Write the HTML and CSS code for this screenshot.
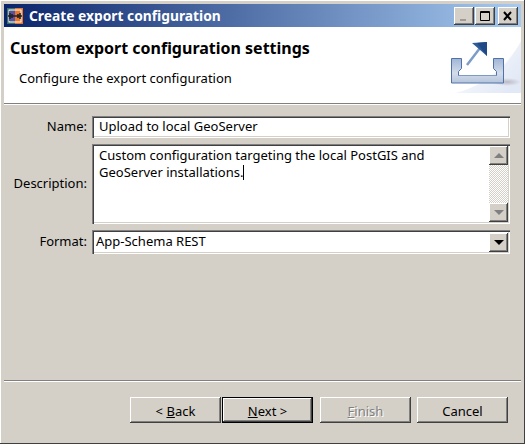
FILE: index.html
```html
<!DOCTYPE html>
<html lang="en">
<head>
  <meta charset="UTF-8" />
  <title>Create export configuration</title>
  <link rel="stylesheet" href="styles.css">
</head>
<body>

  <div class="window">
    <header class="titlebar">
      <svg class="app-icon" width="16" height="16" viewBox="0 0 16 16">
        <rect x="0" y="0" width="8" height="16" fill="#3f6f6a"/>
        <rect x="8" y="0" width="8" height="16" fill="#e8762c"/>
        <rect x="2" y="2" width="12" height="12" fill="none" stroke="#fff" stroke-width="1"/>
        <rect x="2" y="3" width="6" height="10" fill="#5a4fa0"/>
        <path d="M1 8h14M3 5v6M5 6v4M11 6v4M13 5v6" stroke="#222" stroke-width="1.6" fill="none"/>
      </svg>
      <span class="title-text">Create export configuration</span>
      <div class="win-btns">
        <button class="win-btn"><svg width="16" height="14" viewBox="0 0 16 14"><rect x="4" y="10" width="6" height="2" fill="#a09c94"/></svg></button>
        <button class="win-btn max-btn"><svg width="16" height="14" viewBox="0 0 16 14"><path d="M3.5 2.5h9v9h-9zM3 3.5h10" fill="none" stroke="#000"/></svg></button>
        <button class="win-btn close-btn"><svg width="16" height="14" viewBox="0 0 16 14"><path d="M4 3l7 8M11 3l-7 8" fill="none" stroke="#000" stroke-width="2"/></svg></button>
      </div>
    </header>

    <section class="banner">
      <div class="banner-text">
        <h1>Custom export configuration settings</h1>
        <p>Configure the export configuration</p>
      </div>
      <svg class="banner-art" width="80" height="76" viewBox="0 0 80 76">
        <defs>
          <linearGradient id="sweep" x1="0" y1="0" x2="1" y2="0.7">
            <stop offset="0" stop-color="#fff"/>
            <stop offset="1" stop-color="#e2e9f6"/>
          </linearGradient>
          <linearGradient id="tray" x1="0" y1="0" x2="0" y2="1">
            <stop offset="0" stop-color="#9fb5d5"/>
            <stop offset="0.6" stop-color="#d3dcea"/>
            <stop offset="1" stop-color="#b4c4dc"/>
          </linearGradient>
          <radialGradient id="shade">
            <stop offset="0" stop-color="#b9b9c4"/>
            <stop offset="1" stop-color="#b9b9c4" stop-opacity="0"/>
          </radialGradient>
        </defs>
        <path d="M14 66C40 60 66 40 80 14V66z" fill="url(#sweep)"/>
        <path d="M34 30C50 18 66 8 80 0v14C66 40 50 56 14 66z" fill="#fff" opacity="0.45"/>
        <ellipse cx="66" cy="55" rx="14" ry="4" fill="url(#shade)"/>
        <path d="M10.5 31.500h10v10l-3 3v4h38v-4l-3-3v-10h10v24.500h-52z" fill="url(#tray)" stroke="#4f73a8"/>
        <path d="M17.500 48.500h38" stroke="#7f9ac2"/>
        <path d="M26 38l13-17" stroke="#7d9cc8" stroke-width="2.500" fill="none"/>
        <path d="M31 16l15-1v14z" fill="#2f5c98"/>
        <path d="M36 16l10-1v14z" fill="#1f4a85"/>
      </svg>
    </section>

    <main class="form">
      <label class="field-label">Name:</label>
      <div class="field"><input class="text-input" type="text" value="Upload to local GeoServer"></div>

      <label class="field-label">Description:</label>
      <div class="field memo">
        <div class="memo-text">Custom configuration targeting the local PostGIS and GeoServer installations.<span class="caret"></span></div>
        <div class="scrollbar">
          <button class="scroll-btn"><span class="arrow up"></span></button>
          <div class="scroll-track"></div>
          <button class="scroll-btn"><span class="arrow down"></span></button>
        </div>
      </div>

      <label class="field-label">Format:</label>
      <div class="field combo">
        <span class="combo-value">App-Schema REST</span>
        <button class="scroll-btn"><span class="arrow down dark"></span></button>
      </div>
    </main>

    <footer class="footer">
      <button class="btn"><span>&lt; <u>B</u>ack</span></button>
      <button class="btn default"><span><u>N</u>ext &gt;</span></button>
      <button class="btn disabled finish"><span><u>F</u>inish</span></button>
      <button class="btn cancel"><span>Cancel</span></button>
    </footer>
  </div>

</body>
</html>
```

FILE: styles.css
```css
html, body {
  margin: 0;
  height: 100%;
  overflow: hidden;
}

body {
  font-family: "Noto Sans", sans-serif;
  font-size: 13px;
  color: #000;
  background: #d4d0c8;
}

button {
  font: inherit;
  color: inherit;
  padding: 0;
  background: #d4d0c8;
  border: none;
}

.window {
  box-sizing: border-box;
  width: 525px;
  height: 444px;
  padding: 4px;
  display: flex;
  flex-direction: column;
  background: #d4d0c8;
  box-shadow: inset -1px -1px 0 #404040, inset 1px 1px 0 #fff;
}

.titlebar {
  height: 23px;
  flex: none;
  display: flex;
  align-items: center;
  padding: 0 3px;
  background: linear-gradient(to right, #0a246a, #a6caf0);
  color: #fff;
}

.app-icon {
  margin-right: 6px;
}

.title-text {
  flex: 1;
  font-weight: bold;
  font-size: 13.8px;
}

.win-btns {
  display: flex;
}

.win-btn {
  width: 20px;
  height: 18px;
  margin-left: 3px;
  display: flex;
  align-items: center;
  justify-content: center;
  box-shadow: inset -1px -1px 0 #404040, inset 1px 1px 0 #fff, inset -2px -2px 0 #808080;
}

.win-btn.max-btn {
  margin-left: 1px;
}

.banner {
  height: 76px;
  flex: none;
  display: flex;
  justify-content: space-between;
  background: #fff;
  border-bottom: 1px solid #808080;
}

.banner-text {
  padding: 10px 0 0 6px;
}

h1 {
  margin: 0;
  font-size: 16px;
  font-weight: bold;
}

p {
  margin: 10px 0 0 9px;
}

.banner-art {
  flex: none;
}

.form {
  flex: 1;
  display: grid;
  grid-template-columns: 83px 418px;
  grid-template-rows: 22px 80px 24px;
  column-gap: 5px;
  row-gap: 6px;
  padding-top: 11px;
  border-top: 1px solid #fff;
  align-content: start;
}

.field-label {
  align-self: center;
  text-align: right;
  padding-bottom: 2px;
}

.field {
  box-sizing: border-box;
  background: #fff;
  box-shadow: inset 1px 1px 0 #808080, inset 2px 2px 0 #404040, inset -1px -1px 0 #fff, inset -2px -2px 0 #d4d0c8;
}

.text-input {
  box-sizing: border-box;
  width: 100%;
  height: 100%;
  padding: 0 7px 2px;
  border: none;
  outline: none;
  background: transparent;
  font: inherit;
}

.memo {
  display: flex;
  padding: 2px;
}

.memo-text {
  flex: 1;
  padding: 1px 5px;
  line-height: 17px;
}

.caret {
  display: inline-block;
  width: 1px;
  height: 15px;
  background: #000;
  vertical-align: -3px;
}

.scrollbar {
  width: 19px;
  display: flex;
  flex-direction: column;
}

.scroll-track {
  flex: 1;
  background: repeating-conic-gradient(#d4d0c8 0 25%, #fff 0 50%) 0 0 / 2px 2px;
}

.scroll-btn {
  width: 19px;
  height: 19px;
  flex: none;
  display: flex;
  align-items: center;
  justify-content: center;
  box-shadow: inset -1px -1px 0 #404040, inset 1px 1px 0 #fff, inset -2px -2px 0 #808080;
}

.arrow {
  width: 0;
  height: 0;
  border-left: 5px solid transparent;
  border-right: 5px solid transparent;
}

.arrow.up {
  border-bottom: 5px solid #808080;
}

.arrow.down {
  border-top: 5px solid #808080;
}

.arrow.down.dark {
  border-top-color: #000;
}

.combo {
  display: flex;
  align-items: center;
  justify-content: space-between;
  padding: 2px;
}

.combo-value {
  padding: 0 0 2px 2px;
}

.footer {
  height: 60px;
  flex: none;
  box-sizing: border-box;
  border-top: 1px solid #808080;
  box-shadow: inset 0 1px 0 #fff;
  display: flex;
  padding: 16px 0 0 126px;
}

.btn {
  width: 91px;
  height: 26px;
  margin-right: 1px;
  padding-top: 1px;
  box-shadow: inset -1px -1px 0 #404040, inset 1px 1px 0 #fff, inset -2px -2px 0 #808080;
}

.btn.default {
  box-shadow: inset 0 0 0 1px #000, inset -2px -2px 0 #404040, inset 2px 2px 0 #fff, inset -3px -3px 0 #808080;
}

.btn.disabled {
  color: #808080;
  text-shadow: 1px 1px 0 #fff;
}

.btn.finish {
  margin-left: 6px;
}

.btn.cancel {
  margin-left: 5px;
}
```
